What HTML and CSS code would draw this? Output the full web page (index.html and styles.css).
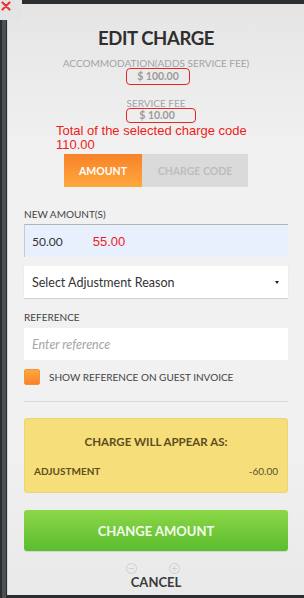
FILE: index.html
```html
<!DOCTYPE html>
<html>
<head>
  <meta charset="UTF-8">
  <meta name="viewport" content="width=device-width, initial-scale=1.0">
  <title>Edit Charge</title>
  <link rel="stylesheet" href="styles.css">
</head>
<body>
  <div class="modal">
    <button class="close-button" aria-label="Close">
      <svg width="10" height="10" viewBox="0 0 10 10"><path d="M1.5 1.5l7 7M8.5 1.5l-7 7" stroke="#e53935" stroke-width="2.2" stroke-linecap="round"/></svg>
    </button>

    <h1 class="title">EDIT CHARGE</h1>

    <div class="fee-label">ACCOMMODATION(ADDS SERVICE FEE)</div>
    <div class="fee-amount fee-main">$ 100.00</div>
    <div class="fee-label fee-label-service">SERVICE FEE</div>
    <div class="fee-amount fee-service">$ 10.00</div>

    <p class="note">Total of the selected charge code<br>110.00</p>

    <div class="tabs">
      <button class="tab active">AMOUNT</button>
      <button class="tab">CHARGE CODE</button>
    </div>

    <label class="field-label field-label-first">NEW AMOUNT(S)</label>
    <div class="text-input amount-input">
      <span class="amount-value">50.00</span>
      <span class="note-inline">55.00</span>
    </div>

    <div class="select-box">
      <span>Select Adjustment Reason</span>
      <span class="caret"></span>
    </div>

    <label class="field-label">REFERENCE</label>
    <div class="text-input placeholder">Enter reference</div>

    <label class="check-row">
      <span class="check-box"></span>
      SHOW REFERENCE ON GUEST INVOICE
    </label>

    <hr class="divider">

    <div class="preview">
      <div class="preview-title">CHARGE WILL APPEAR AS:</div>
      <div class="preview-row">
        <span class="preview-name">ADJUSTMENT</span>
        <span class="preview-value">-60.00</span>
      </div>
    </div>

    <button class="primary-button">CHANGE AMOUNT</button>

    <div class="cancel-row">
      <span class="zoom-icon zoom-out"></span>
      <span class="cancel">CANCEL</span>
      <span class="zoom-icon zoom-in"></span>
    </div>
  </div>
</body>
</html>
```

FILE: styles.css
```css
:root {
  --text-color: #333333;
  --label-color: #444444;
  --muted-color: #a3a3a3;
  --note-color: #ee1c1c;
  --orange-top: #f8822a;
  --orange-bottom: #ffa83c;
  --border-color: #d9d9d9;
}

* {
  box-sizing: border-box;
}

body {
  margin: 0;
  width: 304px;
  height: 598px;
  overflow: hidden;
  font-family: 'Lato', sans-serif;
  color: var(--text-color);
  background: linear-gradient(to right, #2b2e31 2px, #4d5053 2px, #4d5053 6px, #2b2e31 6px);
}

.modal {
  position: relative;
  margin: 4px 0 0 7px;
  height: 591px;
  padding: 22px 16px 0;
  background: linear-gradient(#e5e5e5, #f1f1f1 25%, #f1f1f1 75%, #e9e9e9);
  border-left: 1px solid #d6d6d6;
}

/* close button sits on the corner of the panel */
.close-button {
  position: absolute;
  top: -4px;
  left: -8px;
  width: 22px;
  height: 20px;
  padding: 1px 0 0 1px;
  border: none;
  background: #e4e4e4;
  display: flex;
  align-items: flex-start;
  cursor: pointer;
}

.title {
  margin: 0;
  font-size: 18.5px;
  line-height: 24px;
  font-weight: 700;
  letter-spacing: -0.4px;
  text-align: center;
  color: #2f2f2f;
}

.fee-label {
  margin-top: 8px;
  font-size: 10px;
  line-height: 10px;
  text-align: center;
  color: var(--muted-color);
}

.fee-label-service {
  margin-top: 13px;
}

.fee-amount {
  margin-left: 102px;
  border: 1.5px solid #e32626;
  border-radius: 4px;
  font-size: 10.5px;
  font-weight: 700;
  color: #9b9b9b;
  text-align: center;
}

.fee-main {
  width: 64px;
  height: 17px;
  line-height: 14px;
}

.fee-service {
  width: 70px;
  height: 15px;
  line-height: 12px;
  padding-right: 8px;
}

.note {
  margin: 1px 0 0 32px;
  font-family: 'Liberation Sans', Arial, sans-serif;
  font-size: 13px;
  line-height: 14px;
  color: var(--note-color);
}

.tabs {
  display: flex;
  width: 184px;
  height: 33px;
  margin: 2px auto 0;
}

.tab {
  border: none;
  font-family: inherit;
  font-size: 10.5px;
  font-weight: 700;
  background: #dadada;
  color: #bdbdbd;
  width: 106px;
  padding: 0;
}

.tab.active {
  width: 78px;
  background: linear-gradient(var(--orange-top), var(--orange-bottom));
  color: #ffffff;
}

.field-label {
  display: block;
  margin: 13px 0 5px;
  font-size: 10px;
  line-height: 12px;
  color: var(--label-color);
}

.field-label-first {
  margin: 21px 0 4px;
}

.text-input {
  display: flex;
  align-items: center;
  height: 32px;
  padding: 0 8px;
  font-size: 12.5px;
  background: #ffffff;
}

.amount-input {
  height: 33px;
  background: #e8f0fe;
  border-top: 1px solid #b5b5b5;
  border-left: 1px solid #c9c9c9;
  padding-left: 7px;
}

.amount-value {
  font-size: 12px;
}

.note-inline {
  margin-left: 30px;
  font-family: 'Liberation Sans', Arial, sans-serif;
  font-size: 13px;
  color: var(--note-color);
}

.placeholder {
  font-style: italic;
  color: #a6a6a6;
}

.select-box {
  display: flex;
  align-items: center;
  justify-content: space-between;
  height: 32px;
  margin-top: 9px;
  padding: 0 9px 0 8px;
  font-size: 12.5px;
  background: #ffffff;
  box-shadow: 0 1px 1px rgba(0, 0, 0, 0.12);
}

.caret {
  width: 0;
  height: 0;
  border-left: 2.5px solid transparent;
  border-right: 2.5px solid transparent;
  border-top: 3px solid #222222;
}

.check-row {
  display: flex;
  align-items: center;
  gap: 9px;
  margin-top: 9px;
  font-size: 10px;
  color: var(--label-color);
}

.check-box {
  width: 16px;
  height: 16px;
  border-radius: 2px;
  background: linear-gradient(var(--orange-bottom), var(--orange-top));
  border: 1px solid #f0963a;
}

.divider {
  margin: 16px 0 0;
  border: none;
  border-top: 1px solid var(--border-color);
}

.preview {
  margin-top: 16px;
  height: 75px;
  padding: 0 9px;
  background: #f6df7b;
  border: 1px solid #efd470;
  border-radius: 3px;
  color: #5e4d1c;
}

.preview-title {
  margin-top: 16px;
  font-size: 11.5px;
  font-weight: 700;
  text-align: center;
}

.preview-row {
  display: flex;
  justify-content: space-between;
  margin-top: 17px;
  font-size: 10px;
}

.preview-name {
  font-weight: 700;
}

.preview-value {
  color: #5b5131;
}

.primary-button {
  display: block;
  width: 100%;
  height: 41px;
  margin-top: 17px;
  border: none;
  border-radius: 3px;
  font-family: inherit;
  font-size: 13px;
  font-weight: 700;
  color: #f4faee;
  background: linear-gradient(#8cd748, #5bbd2e);
  box-shadow: 0 1px 1px rgba(0, 0, 0, 0.1);
}

.cancel-row {
  position: relative;
  margin-top: 20px;
  text-align: center;
}

.cancel {
  font-size: 13px;
  font-weight: 700;
  color: #3a3a3a;
}

/* faint zoom controls lying over the cancel link */
.zoom-icon {
  position: absolute;
  top: -8px;
  width: 11px;
  height: 11px;
  border: 1px solid #cfcfcf;
  border-radius: 50%;
}

.zoom-icon:before,
.zoom-icon.zoom-in:after {
  content: "";
  position: absolute;
  left: 2px;
  top: 4px;
  width: 5px;
  height: 1px;
  background: #cfcfcf;
}

.zoom-icon.zoom-in:after {
  left: 4px;
  top: 2px;
  width: 1px;
  height: 5px;
}

.zoom-out {
  left: 102px;
}

.zoom-in {
  left: 145px;
}
```
